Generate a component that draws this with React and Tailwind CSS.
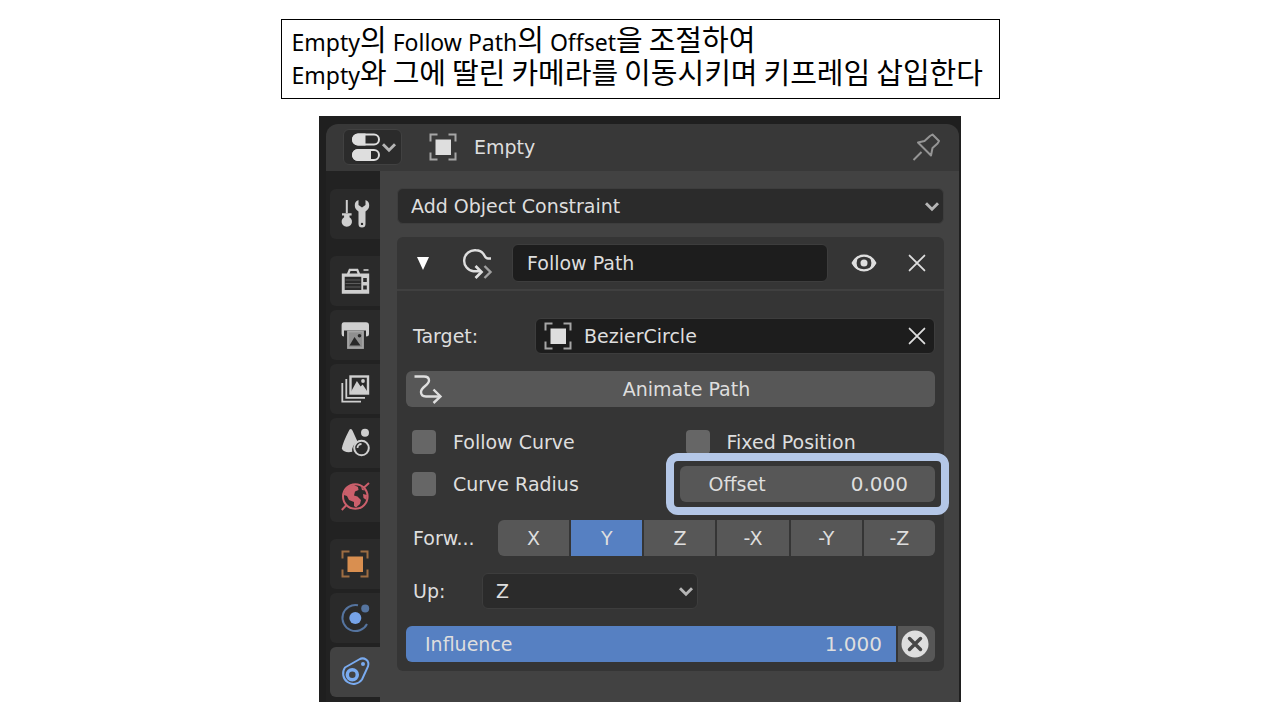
import React, { useState } from "react";

const Icon = ({ children, className = "w-7 h-7" }) => (
  <svg
    viewBox="0 0 28 28"
    fill="none"
    stroke="currentColor"
    strokeWidth="2"
    className={`shrink-0 overflow-visible ${className}`}
    aria-hidden="true"
  >
    {children}
  </svg>
);

/** Icons */
const PropertiesIcon = () => (
  <Icon>
    <rect x="1" y="1.5" width="26" height="10" rx="5" />
    <path d="M12.5 1.5H6a5 5 0 0 0 0 10h6.5z" fill="currentColor" />
    <rect x="1" y="17" width="26" height="10" rx="5" />
    <path d="M18 17H6A5 5 0 0 0 6 27h12z" fill="currentColor" />
  </Icon>
);

const ObjectIcon = ({ cornerClass = "text-[#a6a6a6]" }) => (
  <Icon>
    <path
      className={cornerClass}
      d="M8.5 1.5h-7v7M19.5 1.5h7v7M8.5 26.5h-7v-7M19.5 26.5h7v-7"
    />
    <rect x="6.5" y="6.5" width="15.5" height="15.5" fill="currentColor" stroke="none" />
  </Icon>
);

const PinIcon = () => (
  <Icon>
    <path d="M1.5 27l8-8" />
    <path
      d="M20.5 1.5l6.5 6.5-1.5 2.5-5 4.5-1.5 7.5-13-13 6.5-1.5 5.5-5z"
      strokeLinejoin="round"
    />
  </Icon>
);

const ChevronIcon = () => (
  <Icon className="w-4 h-4">
    <path d="M3.5 9l10.5 10.5L24.5 9" strokeWidth="5" />
  </Icon>
);

const CloseIcon = () => (
  <Icon className="w-4 h-4">
    <path d="M1 1l26 26M27 1L1 27" strokeWidth="3.2" strokeLinecap="round" />
  </Icon>
);

const EyeIcon = () => (
  <Icon className="w-[26px] h-[26px]">
    <path d="M2 14C7.5 3.5 20.5 3.5 26 14C20.5 24.5 7.5 24.5 2 14z" strokeWidth="2.5" />
    <path d="M.8 14q3.5-6 7.5-7.5-4.5 7.5 0 15Q4.3 20 .8 14zM27.2 14q-3.5-6-7.5-7.5 4.5 7.5 0 15 4-1.5 7.5-7.5z" fill="currentColor" stroke="none" />
    <circle cx="14" cy="14" r="3.8" fill="currentColor" stroke="none" />
  </Icon>
);

const FollowPathIcon = () => (
  <Icon>
    <path d="M27 9.5h-3c-3 0-3-2.5-4.5-4.5C17.5 2.5 15 1.3 12 1.3a10.5 10.5 0 0 0-2.5 21H16" strokeWidth="2.4" />
    <path d="M11.5 17l6 6-6 6" strokeWidth="2.7" />
    <path d="M20.5 17l6 6-6 6" strokeWidth="2.4" className="text-[#a0a0a0]" />
  </Icon>
);

const CurveIcon = () => (
  <Icon>
    <path d="M.5 1.5H10c3 0 5 1.5 5 4 0 5-8 6-8 11.5 0 3 2 4.5 5 4.5h14" strokeWidth="2.4" />
    <path d="M19.5 14.5l7 7-7 6.5" strokeWidth="2.4" />
  </Icon>
);

const ToolIcon = () => (
  <Icon>
    <path d="M5.8 0v13" />
    <path d="M1 13.2h9.6v2.2H8.5v1.8a5.2 5.2 0 1 1-5.4 0v-1.8H1z" fill="currentColor" stroke="none" />
    <path
      fillRule="evenodd"
      d="M17.5 0C14.5 1 13.8 3 13.8 5.5c0 3 1.5 4.5 3.7 6V24a3.5 3.5 0 0 0 7 0V11.5c2.2-1.5 3.7-3 3.7-6C28.2 3 27.5 1 24.5 0v5L21 7.5 17.5 5zM21 22.7a1.2 1.2 0 1 1 0 2.4 1.2 1.2 0 0 1 0-2.4z"
      fill="currentColor"
      stroke="none"
    />
  </Icon>
);

const RenderIcon = () => (
  <Icon>
    <path
      fillRule="evenodd"
      d="M.8 6.5H6l2-4.8h9l2 4.8h9.2v20.2H.8zM3.7 9.7v13.3h16.6V9.7zM22.2 11v4h3.6v-4zM22.2 18.5v4h3.6v-4zM9.5 4l-1 2.5h8l-1-2.5z"
      fill="currentColor"
      stroke="none"
    />
    <path d="M4.5 13h15M4.5 16.5h15M4.5 20h15" strokeWidth="1" className="text-[#5c5c5c]" />
    <path d="M22.5 3h5" strokeWidth="1.6" />
  </Icon>
);

const OutputIcon = () => (
  <Icon>
    <path d="M3 1.2h22q3 0 3 3V13q0 2.5-3 2.5V9.5H3v6Q.6 15.5.6 13V4.2q0-3 2.4-3z" fill="currentColor" stroke="none" />
    <rect x="7" y="10.5" width="15" height="16.5" strokeWidth="1.8" fill="#8f8f8f" className="text-[#a5a5a5]" />
    <path d="M8.5 24.5l5-8.5 6 8.5z" fill="#292929" stroke="none" />
    <circle cx="18.5" cy="14.8" r="1.8" fill="#292929" stroke="none" />
  </Icon>
);

const ViewLayerIcon = () => (
  <Icon>
    <rect x="9.5" y="1.5" width="17.5" height="17" strokeWidth="2.4" />
    <path d="M11 17l5-9 3.5 5 2-2 4 6z" fill="currentColor" />
    <circle cx="22" cy="6" r="1.9" fill="currentColor" stroke="none" />
    <path d="M5.3 4v18.8H24" strokeWidth="1.8" />
    <path d="M1.3 8v18.7H20" strokeWidth="1.8" />
  </Icon>
);

const SceneIcon = () => (
  <Icon>
    <path d="M9.7 0q1.3 0 2 2l5 11a9 9 0 0 0-5.5 9.8C7 24 2 23 .8 19.5q1-6 7-17.5.7-2 1.9-2z" fill="currentColor" stroke="none" />
    <circle cx="24" cy="3.8" r="4" fill="currentColor" stroke="none" />
    <circle cx="20.5" cy="19" r="7.3" />
    <path d="M16.5 19a4 4 0 0 1 4-4" strokeWidth="1.8" />
  </Icon>
);

const WorldIcon = () => (
  <Icon>
    <circle cx="14.3" cy="13.5" r="12.3" />
    <path d="M3 12C3 6 8 2 13 2l4 2 .5 3-3.5 1.5-1 4 3.5 1 3.5 3.5-1 4-4 3.5-2-1.5v-4l-5-2-2-4z" fill="currentColor" stroke="none" />
    <path d="M20 3.5l4 4-3-.5zM22 11l4 1-.5 5-3-2z" fill="currentColor" stroke="none" />
    <path d="M23 4.5L28 0M5.5 22L.8 27" />
  </Icon>
);

const PhysicsIcon = () => (
  <Icon>
    <path d="M17 1.3A13 13 0 1 0 26 20" className="text-[#55749f]" />
    <circle cx="14.3" cy="14" r="6" fill="currentColor" stroke="none" />
    <circle cx="24.2" cy="4.5" r="4" className="text-[#55749f]" fill="currentColor" stroke="none" />
  </Icon>
);

const ConstraintIcon = () => (
  <Icon>
    <path d="M4 9.5L18 1.5c5-3 11 1 9 7L21 21.5A10.3 10.3 0 1 1 4 9.5z" />
    <circle cx="11.3" cy="16.8" r="5" strokeWidth="3.5" />
    <circle cx="22" cy="6" r="2" fill="currentColor" stroke="none" />
  </Icon>
);

const tabGroups = [
  [{ id: "Tool", Glyph: ToolIcon, color: "text-[#cfcfcf]" }],
  [
    { id: "Render", Glyph: RenderIcon, color: "text-[#cfcfcf]" },
    { id: "Output", Glyph: OutputIcon, color: "text-[#cfcfcf]" },
    { id: "View Layer", Glyph: ViewLayerIcon, color: "text-[#cfcfcf]" },
    { id: "Scene", Glyph: SceneIcon, color: "text-[#cfcfcf]" },
    { id: "World", Glyph: WorldIcon, color: "text-[#cb5f6b]" },
  ],
  [
    { id: "Object", Glyph: ObjectIcon, color: "text-[#d98f50]", corner: "text-[#9d6d42]" },
    { id: "Physics", Glyph: PhysicsIcon, color: "text-[#76a3e8]" },
    { id: "Constraints", Glyph: ConstraintIcon, color: "text-[#7aabf0]" },
  ],
];

const axes = ["X", "Y", "Z", "-X", "-Y", "-Z"];

const Tabs = ({ active, onChange }) => (
  <nav className="w-[54px] shrink-0 bg-[#222222] pl-1 pt-[18px] flex flex-col gap-[17px]">
    {tabGroups.map((group, i) => (
      <div key={i} className="flex flex-col gap-1">
        {group.map(({ id, Glyph, color, corner }) => (
          <button
            key={id}
            aria-label={id}
            onClick={() => onChange(id)}
            className={`h-[50px] flex items-center justify-center rounded-l-md ${color} ${
              active === id ? "bg-[#424242]" : "bg-[#2a2a2a]"
            }`}
          >
            <Glyph cornerClass={corner} />
          </button>
        ))}
      </div>
    ))}
  </nav>
);

const Dropdown = ({ id, label, options, className }) => (
  <div className={`relative ${className}`}>
    <select
      id={id}
      aria-label={label}
      className="w-full h-9 pl-[13px] pr-8 appearance-none rounded-md bg-[#2b2b2b] border border-[#3d3d3d]"
    >
      {options.map((o) => (
        <option key={o}>{o}</option>
      ))}
    </select>
    <span className="absolute right-1 inset-y-0 flex items-center pointer-events-none text-[#b5b5b5]">
      <ChevronIcon />
    </span>
  </div>
);

const Check = ({ label }) => (
  <label className="h-9 pl-1.5 flex items-center gap-[17px]">
    <input type="checkbox" className="appearance-none w-6 h-6 rounded bg-[#666666] checked:bg-[#5680c2]" />
    {label}
  </label>
);

const ConstraintCard = () => {
  const [forward, setForward] = useState("Y");

  return (
    <section className="mt-[13px] rounded-md bg-[#353535]">
      {/* Card header */}
      <div className="h-[54px] px-[9px] flex items-center border-b-2 border-[#404040]">
        <button aria-label="Collapse" className="w-[34px] h-9 flex items-center justify-center text-white">
          <svg viewBox="0 0 12 13" className="w-3 h-[13px]" fill="currentColor" aria-hidden="true">
            <path d="M0 0h12L6 13z" />
          </svg>
        </button>
        <button aria-label="Constraint type" className="ml-6">
          <FollowPathIcon />
        </button>
        <input
          aria-label="Constraint name"
          defaultValue="Follow Path"
          className="ml-5 min-w-0 flex-1 h-[38px] px-3.5 rounded-md bg-[#1d1d1d] border border-[#3d3d3d]"
        />
        <button aria-label="Toggle visibility" className="ml-[18px] w-9 h-9 flex items-center justify-center">
          <EyeIcon />
        </button>
        <button aria-label="Delete constraint" className="ml-[17px] w-9 h-9 flex items-center justify-center">
          <CloseIcon />
        </button>
      </div>

      {/* Card body */}
      <div className="px-[9px] pt-[27px] pb-[9px] flex flex-col gap-[17px]">
        <div className="flex items-center">
          <label htmlFor="target" className="w-[129px] pl-[7px]">Target:</label>
          <div className="min-w-0 flex-1 h-9 pl-2 flex items-center rounded-md bg-[#1d1d1d] border border-[#3d3d3d]">
            <ObjectIcon />
            <input id="target" defaultValue="BezierCircle" className="ml-3 min-w-0 flex-1 bg-transparent" />
            <button aria-label="Clear target" className="w-[34px] h-[34px] flex items-center justify-center">
              <CloseIcon />
            </button>
          </div>
        </div>

        <button className="h-9 pl-2 pr-1 flex items-center rounded-md bg-[#575757]">
          <CurveIcon />
          <span className="flex-1 text-center">Animate Path</span>
        </button>

        <div className="pb-px grid grid-cols-2 gap-x-[18px] gap-y-1.5">
          <Check label="Follow Curve" />
          <Check label="Fixed Position" />
          <Check label="Curve Radius" />
          <div className="relative h-9 pl-[29px] pr-[27px] flex items-center rounded-md bg-[#575757]">
            <label htmlFor="offset">Offset</label>
            <input id="offset" defaultValue="0.000" className="min-w-0 flex-1 text-right text-[20px] bg-transparent" />
            {/* highlight frame around the offset field */}
            <span className="absolute -inset-x-3.5 -inset-y-[13px] rounded-xl border-8 border-[#b4c7e7] pointer-events-none" />
          </div>
        </div>

        <div className="flex items-center">
          <span id="forward" className="w-[92px] pl-[7px]">Forw...</span>
          <div role="group" aria-labelledby="forward" className="flex-1 grid grid-cols-6 gap-0.5 rounded-md overflow-hidden">
            {axes.map((axis) => (
              <button
                key={axis}
                onClick={() => setForward(axis)}
                className={`h-9 ${forward === axis ? "bg-[#5680c2]" : "bg-[#575757]"}`}
              >
                {axis}
              </button>
            ))}
          </div>
        </div>

        <div className="flex items-center">
          <label htmlFor="up" className="w-[76px] pl-[7px]">Up:</label>
          <Dropdown id="up" options={["Z", "Y", "X"]} className="w-[216px]" />
        </div>

        <div className="flex gap-0.5 rounded-md overflow-hidden">
          <div className="min-w-0 flex-1 h-9 pl-[19px] pr-3.5 flex items-center bg-[#5680c2]">
            <label htmlFor="influence">Influence</label>
            <input id="influence" defaultValue="1.000" className="min-w-0 flex-1 text-right text-[20px] bg-transparent" />
          </div>
          <button aria-label="Reset influence" className="w-[37px] h-9 pr-1 flex items-center justify-center bg-[#575757]">
            <Icon>
              <circle cx="14" cy="14" r="13.5" fill="currentColor" stroke="none" />
              <path d="M8.5 8.5l11 11M19.5 8.5l-11 11" stroke="#484848" strokeWidth="3.5" strokeLinecap="round" />
            </Icon>
          </button>
        </div>
      </div>
    </section>
  );
};

const captionLines = [
  "Empty의 Follow Path의 Offset을 조절하여",
  "Empty와 그에 딸린 카메라를 이동시키며 키프레임 삽입한다",
];

// Hangul runs are set larger than the Latin text and spaces around them
const MixedText = ({ text }) =>
  text.split(/([가-힣]+)/).map((part, i) =>
    i % 2 ? (
      <span key={i} className="text-[29px] leading-none">{part}</span>
    ) : (
      part
    )
  );

const App = () => {
  const [tab, setTab] = useState("Constraints");

  return (
    <main className="min-h-screen bg-white pt-[19px] flex flex-col items-center">
      <h1 className="w-full max-w-[719px] h-20 px-[10px] pt-[5px] border border-black font-['Noto_Sans','Noto_Sans_CJK_KR',sans-serif] text-[23px] leading-8 text-black">
        {captionLines.map((line) => (
          <span key={line} className="block">
            <MixedText text={line} />
          </span>
        ))}
      </h1>

      <div className="mt-[17px] w-full max-w-[642px] pl-[7px] pr-0.5 pt-2 bg-[#1f1f1f] font-['DejaVu_Sans',sans-serif] text-[19px] leading-6 text-[#dedede]">
        <header className="h-[47px] pl-[17px] pr-[19px] pb-0.5 flex items-center rounded-t-xl bg-[#383838]">
          <button
            aria-label="Editor type"
            className="w-[59px] h-9 px-2 flex items-center justify-between rounded-md bg-[#2b2b2b] border border-[#414141]"
          >
            <PropertiesIcon />
            <span className="text-[#b5b5b5] -mr-1">
              <ChevronIcon />
            </span>
          </button>
          <span className="ml-[27px]">
            <ObjectIcon />
          </span>
          <span className="ml-[17px] flex-1">Empty</span>
          <button aria-label="Pin" className="text-[#959595]">
            <PinIcon />
          </button>
        </header>

        <div className="flex">
          <Tabs active={tab} onChange={setTab} />
          <div className="min-w-0 flex-1 bg-[#424242] pl-[17px] pr-[15px] pt-[17px] pb-[31px]">
            <Dropdown label="Add Object Constraint" options={["Add Object Constraint"]} className="w-full" />
            <ConstraintCard />
          </div>
        </div>
      </div>
    </main>
  );
};

export default App;
